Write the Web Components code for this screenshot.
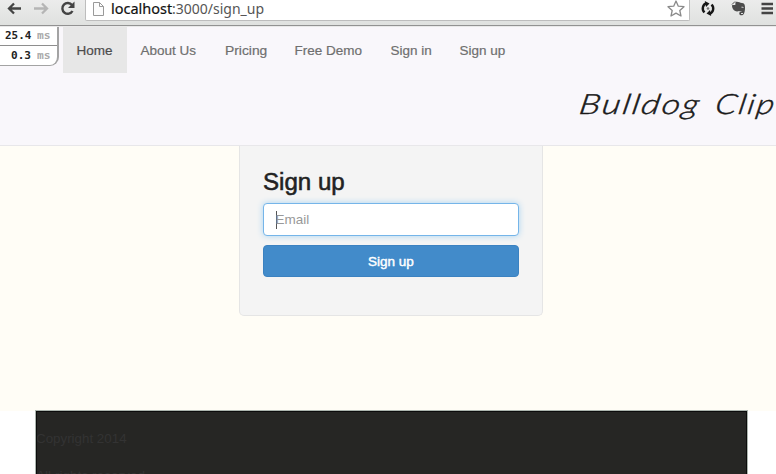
<!DOCTYPE html>
<html lang="en"><head><meta charset="utf-8"><title>Bulldog Clip</title>
<style>html,body{margin:0;height:474px;overflow:hidden;background:#fff;font-family:"Liberation Sans",Arial,sans-serif}</style></head>
<body><sign-up-page></sign-up-page>
<script>
const define=(name,html,setup)=>customElements.define(name,class extends HTMLElement{
  connectedCallback(){
    if(this.shadowRoot)return;
    const t=document.createElement('template');t.innerHTML=html;
    this.attachShadow({mode:'open'}).append(t.content.cloneNode(true));
    if(setup)setup(this);
  }
});

// Text run scaled horizontally so it fills a given width.
define('fit-text',`<style>:host{display:inline-block;white-space:pre;text-align:left}span{display:inline-block;transform-origin:0 50%}</style><span><slot></slot></span>`,el=>{
  const s=el.shadowRoot.querySelector('span'),w=+el.getAttribute('width');
  const natural=s.offsetWidth;
  el.style.width=w+'px';
  s.style.transform='scaleX('+w/natural+')';
});

define('browser-bar',`<style>
:host{display:flex;height:26px;box-sizing:border-box;background:linear-gradient(#ececec,#dfe1df);border-bottom:1px solid #929292;align-items:flex-start}
.nav{width:85px;height:20px;flex:none}
.url{display:flex;width:605px;height:21px;box-sizing:border-box;background:#fff;border:solid #bdbdbd;border-width:0 1px 1px;border-radius:0 0 2px 2px;font:14px/17px "Noto Sans","Open Sans",sans-serif;color:#555;justify-content:space-between}
.left{display:flex}b{font-weight:400;color:#111;-webkit-text-stroke:.2px #111}
svg{display:block}
</style>
<svg class="nav" viewBox="0 0 85 20" fill="none"><path d="M21 8.500H9M14 3.500L9 8.500L14 13.500" stroke="#444" stroke-width="2.300"/><path d="M34 8.500H47M42 3.500L47 8.500L42 13.500" stroke="#b5b5b5" stroke-width="2.300"/><path d="M72 5A5.400 5.400 0 1 0 72.500 11" stroke="#444" stroke-width="2.400"/><path d="M74.500 1.500V8H68Z" fill="#444"/></svg>
<div class="url"><div class="left"><svg width="25" height="19" viewBox="0 0 25 19"><path d="M7.500 2.500H13.500L17.500 6.500V15.500H7.500ZM13.500 2.500V6.500H17.500" fill="#fcfcfc" stroke="#999"/></svg><fit-text width="61"><b>localhost</b></fit-text><fit-text width="92">:3000/sign_up</fit-text></div>
<svg width="23" height="19" viewBox="0 0 23 19"><path d="M10 1L12.300 6.200L18 6.700L13.800 10.500L15 16L10 13.100L5 16L6.200 10.500L2 6.700L7.700 6.200Z" fill="#fff" stroke="#8a8a8a" stroke-width="1.300" stroke-linejoin="round"/></svg></div>
<svg width="86" height="20" viewBox="690 0 86 20" fill="none"><path d="M706.500 3.200A5.500 5.500 0 0 0 704.500 12.400M709.500 13.800A5.500 5.500 0 0 0 711.500 4.600" stroke="#161616" stroke-width="2.400"/><path d="M704.800 1L709.500 3.400L706 7ZM711.200 16L706.500 13.600L710 10Z" fill="#161616"/><circle cx="708" cy="8.500" r="1.300" fill="#777"/>
<path d="M735.500 2C738 1.300 739.500 2.600 742 3C744 3.100 744.800 4 745 7C745.200 10 744.500 13.500 743.200 14.700C741.500 15.800 739 15.300 739.300 13.200C739.400 11.700 741 11.700 742 12C741.500 10.500 740 11.500 739 11C737.500 12 734 11.400 733 9C732 7 731.800 5.700 732.300 5L735.300 5Z" fill="#4c4c4c"/><path d="M732 4.500L735 1.500" stroke="#4c4c4c"/><path d="M741.500 7.200Q743 6.800 743.500 8" stroke="#ddd"/><path d="M741 13.500H743" stroke="#ddd"/>
<path d="M761.500 4H773M761.500 8.500H773M761.500 13H773" stroke="#444" stroke-width="2.500"/></svg>`);

define('timing-badge',`<style>
:host{position:absolute;left:-1px;top:-1px;width:60px;height:40px;box-sizing:border-box;background:#fff;border:1px solid #a3a3a3;border-width:0 2px 1px 0;border-radius:0 0 9px 0;font:bold 10.500px/18px "DejaVu Sans Mono","Liberation Mono",monospace;color:#222;z-index:2}
div{display:flex;justify-content:flex-end;gap:6px;height:19px;padding-right:6px}div+div{border-top:1px solid #8e8e8e;height:20px}i{font-style:normal;color:#aaa}
</style><div><fit-text width="26">25.4</fit-text><i><fit-text width="14">ms</fit-text></i></div><div><fit-text width="20">0.3</fit-text><i><fit-text width="14">ms</fit-text></i></div>`);

define('nav-item',`<style>:host{display:flex;height:46px;padding:0 14px;box-sizing:border-box;color:#6f6f6f;font-size:13.500px;line-height:47px;-webkit-text-stroke:.2px currentColor}:host([active]){background:#e7e7e7;color:#4c4c4c}</style><slot></slot>`);

define('site-header',`<style>
:host{display:block;position:relative;height:120px;box-sizing:border-box;background:#f9f7fb;border-bottom:1px solid #e8e7ea;border-top:1px solid #e9e9e9;overflow:hidden}
nav{display:flex;padding-left:62.500px}
.brand{display:flex;justify-content:flex-end;gap:14px;height:71px;color:#1a1a1a;font:italic 300 28px/60px "Lato","Open Sans",cursive;letter-spacing:1.500px;-webkit-text-stroke:.45px #1a1a1a}
.brand fit-text{transform:skewX(-10deg)}
</style><timing-badge></timing-badge><nav><nav-item active><fit-text width="36">Home</fit-text></nav-item><nav-item><fit-text width="56">About Us</fit-text></nav-item><nav-item><fit-text width="42">Pricing</fit-text></nav-item><nav-item><fit-text width="68">Free Demo</fit-text></nav-item><nav-item><fit-text width="41">Sign in</fit-text></nav-item><nav-item><fit-text width="46">Sign up</fit-text></nav-item></nav><div class="brand"><fit-text width="122">Bulldog</fit-text><fit-text width="61">Clip</fit-text></div>`);

define('sign-up-form',`<style>
:host{display:flex;flex-direction:column;width:304px;height:170px;margin-left:239px;box-sizing:border-box;background:#f4f4f4;border:1px solid #e5e5e5;border-top:0;border-radius:0 0 5px 5px;padding:19px 23px 0}
h1{margin:0;height:38px;font-size:23.500px;line-height:34px;font-weight:500;color:#222;-webkit-text-stroke:.55px #222}
.field{display:flex;align-items:center;height:33px;box-sizing:border-box;background:#fff;border:1px solid #75b5e9;border-radius:4px;box-shadow:0 0 6px #a9d4f2;padding-left:11.500px;font-size:13.500px;color:#999}
.field:before{content:"";width:1px;height:18px;background:#555;margin-right:-1px}
button{height:32px;margin:9px 0 0;border:1px solid #3b82c1;border-radius:4px;background:#428bca;color:#fff;font:13.500px/29px "Liberation Sans",sans-serif;-webkit-text-stroke:.45px #fff;padding:0}
</style><h1><fit-text width="82">Sign up</fit-text></h1><div class="field"><fit-text width="34">Email</fit-text></div><button><fit-text width="46">Sign up</fit-text></button>`);

define('site-footer',`<style>:host{display:block;margin:0 29px 0 36px;height:64px;box-sizing:border-box;background:#262624;border:1px solid #0c0c0c;border-bottom:0;outline:1px solid #acb5ae;color:#333;font-size:13.500px;overflow:hidden}
p{margin:0 0 0 -1px;height:37px;line-height:16px;padding-top:19px;box-sizing:border-box}p+p{height:26px;padding-top:19px}</style><p><fit-text width="91">Copyright 2014</fit-text></p><p><fit-text width="109">All rights reserved</fit-text></p>`);

define('sign-up-page',`<style>:host{display:block;width:776px;height:474px;overflow:hidden}main{height:265px;background:#fffdf6}</style><browser-bar></browser-bar><site-header></site-header><main><sign-up-form></sign-up-form></main><site-footer></site-footer>`);
</script></body></html>
